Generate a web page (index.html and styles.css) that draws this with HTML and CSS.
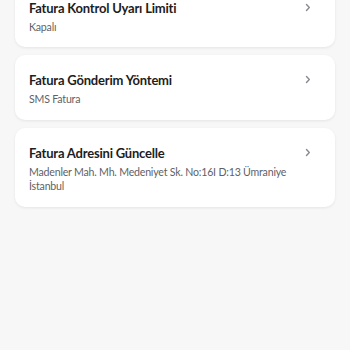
FILE: index.html
```html
<!DOCTYPE html>
<html lang="tr">
<head>
    <meta charset="UTF-8">
    <meta name="viewport" content="width=device-width, initial-scale=1.0">
    <title>Fatura Ayarları</title>
    <link rel="stylesheet" href="styles.css">
</head>
<body>
    <div class="settings-list">
        <div class="setting-card">
            <div class="setting-text">
                <span class="setting-title">Fatura Kontrol Uyarı Limiti</span>
                <span class="setting-value">Kapalı</span>
            </div>
            <svg class="chevron" width="6" height="9" viewBox="0 0 6 9"><path d="M1.5 1.5 L4.3 4.5 L1.5 7.5" fill="none" stroke="#8a8a92" stroke-width="1.4" stroke-linecap="round" stroke-linejoin="round"/></svg>
        </div>
        <div class="setting-card">
            <div class="setting-text">
                <span class="setting-title">Fatura Gönderim Yöntemi</span>
                <span class="setting-value">SMS Fatura</span>
            </div>
            <svg class="chevron" width="6" height="9" viewBox="0 0 6 9"><path d="M1.5 1.5 L4.3 4.5 L1.5 7.5" fill="none" stroke="#8a8a92" stroke-width="1.4" stroke-linecap="round" stroke-linejoin="round"/></svg>
        </div>
        <div class="setting-card">
            <div class="setting-text">
                <span class="setting-title">Fatura Adresini Güncelle</span>
                <span class="setting-value">Madenler Mah. Mh. Medeniyet Sk. No:16I D:13 Ümraniye İstanbul</span>
            </div>
            <svg class="chevron" width="6" height="9" viewBox="0 0 6 9"><path d="M1.5 1.5 L4.3 4.5 L1.5 7.5" fill="none" stroke="#8a8a92" stroke-width="1.4" stroke-linecap="round" stroke-linejoin="round"/></svg>
        </div>
    </div>
</body>
</html>
```

FILE: styles.css
```css
* {
    margin: 0;
    padding: 0;
    box-sizing: border-box;
}

body {
    font-family: Lato, "Noto Sans", sans-serif;
    background-color: #f7f7f8;
    width: 350px;
    height: 350px;
    overflow: hidden;
}

.settings-list {
    display: flex;
    flex-direction: column;
    gap: 8px;
    padding: 0 15px;
    margin-top: -17.5px;
}

.setting-card {
    display: flex;
    align-items: flex-start;
    justify-content: space-between;
    background: white;
    border-radius: 10px;
    box-shadow: 0 1px 3px rgba(0, 0, 0, 0.08);
    padding: 17px 24px 13px 14px;
}

.setting-text {
    display: flex;
    flex-direction: column;
    gap: 3px;
}

.setting-title {
    font-size: 13px;
    font-weight: bold;
    letter-spacing: -0.2px;
    color: #1d1d22;
    line-height: 17px;
}

.setting-value {
    font-size: 10.6px;
    letter-spacing: -0.2px;
    color: #5f5f66;
    line-height: 14.5px;
    padding-right: 10px;
}

.chevron {
    flex-shrink: 0;
    margin-top: 3px;
}
```
